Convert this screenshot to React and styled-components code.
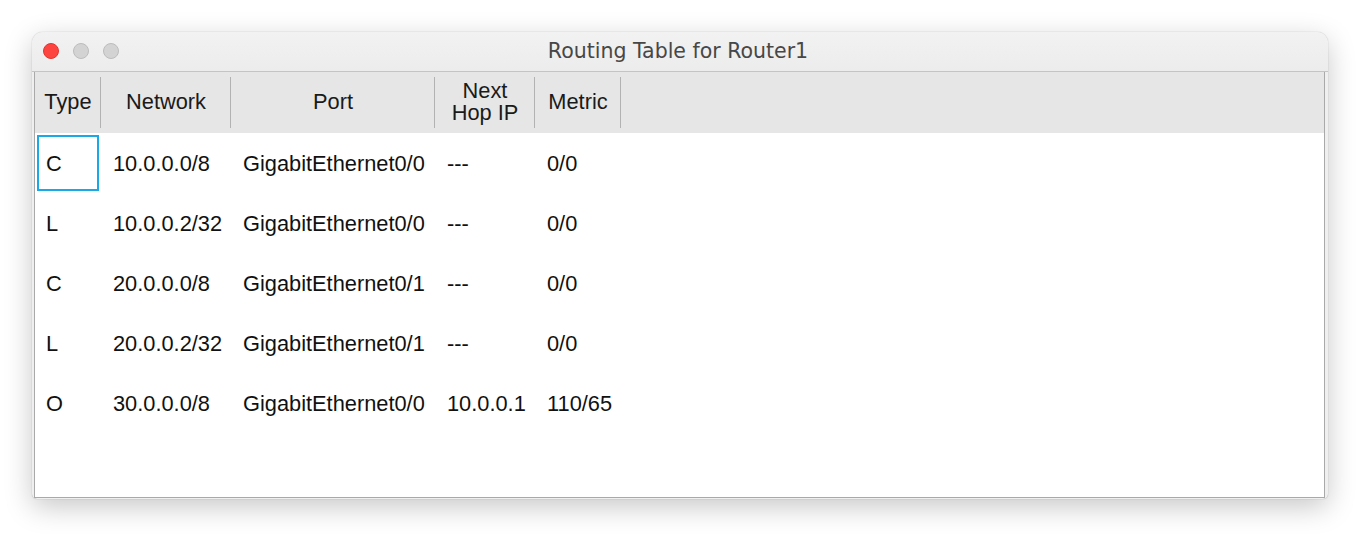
import styled, { createGlobalStyle } from "styled-components";

const GlobalStyle = createGlobalStyle`
    html, body {
        margin: 0;
        padding: 0;
        background: #ffffff;
    }
`;

const Page = styled.div`
    width: 1360px;
    height: 534px;
    box-sizing: border-box;
    padding: 32px 32px 0 32px;
    background: #ffffff;
`;

const Window = styled.div`
    width: 1296px;
    height: 467px;
    box-sizing: border-box;
    display: flex;
    flex-direction: column;
    background: #efefef;
    border-radius: 11px 11px 5px 5px;
    box-shadow: 0 0 1px rgba(0, 0, 0, 0.35), 0 8px 28px rgba(0, 0, 0, 0.22);
    padding: 0 3px 1px 2px;
    overflow: hidden;
`;

const TitleBar = styled.div`
    position: relative;
    height: 39px;
    flex: none;
    display: flex;
    align-items: center;
    justify-content: center;
    border-bottom: 1px solid #c4c4c4;
    margin: 0 -3px 0 -2px;
    background: linear-gradient(#f2f2f2, #ececec);
`;

const Lights = styled.div`
    position: absolute;
    left: 11px;
    top: 11px;
    display: flex;
    gap: 14px;
`;

const Light = styled.span`
    width: 16px;
    height: 16px;
    border-radius: 50%;
    box-sizing: border-box;
    background: ${({ $color }) => $color};
    border: 1px solid ${({ $edge }) => $edge};
`;

const Title = styled.div`
    font-family: "DejaVu Sans", sans-serif;
    font-size: 20.5px;
    color: #474747;
    margin-left: -4px;
    margin-top: -2px;
`;

const TableArea = styled.div`
    flex: 1;
    background: #ffffff;
    border: 1px solid #a9a9a9;
    border-top: none;
    font-family: "Liberation Sans", Arial, sans-serif;
    font-size: 21.8px;
    color: #111111;
`;

const Grid = styled.div`
    display: grid;
    grid-template-columns: 66px 130px 204px 100px 86px 1fr;
`;

const HeadCell = styled.div`
    height: 61px;
    box-sizing: border-box;
    background: #e6e6e6;
    display: flex;
    align-items: center;
    justify-content: center;
    padding-bottom: 2px;
    position: relative;
    color: #1a1a1a;

    &::after {
        content: "";
        display: ${({ $last }) => ($last ? "none" : "block")};
        position: absolute;
        right: -1px;
        top: 5px;
        bottom: 5px;
        width: 2px;
        background: #b2b2b2;
    }
`;

const HeadLabel = styled.div`
    text-align: center;
    line-height: 22px;
    white-space: pre-line;
`;

const Cell = styled.div`
    height: 60px;
    box-sizing: border-box;
    display: flex;
    align-items: center;
    padding-left: ${({ $first }) => ($first ? "11px" : "12px")};
    padding-top: 2px;
    white-space: nowrap;
    position: relative;

    ${({ $selected }) =>
        $selected &&
        `
        &::before {
            content: "";
            position: absolute;
            left: 2px;
            top: 2px;
            width: 62px;
            height: 56px;
            box-sizing: border-box;
            border: 2px solid #1aa9e4;
        }
    `}
`;

const headers = ["Type", "Network", "Port", "Next\nHop IP", "Metric", ""];

const routes = [
    ["C", "10.0.0.0/8", "GigabitEthernet0/0", "---", "0/0"],
    ["L", "10.0.0.2/32", "GigabitEthernet0/0", "---", "0/0"],
    ["C", "20.0.0.0/8", "GigabitEthernet0/1", "---", "0/0"],
    ["L", "20.0.0.2/32", "GigabitEthernet0/1", "---", "0/0"],
    ["O", "30.0.0.0/8", "GigabitEthernet0/0", "10.0.0.1", "110/65"],
];

export default function App() {
    return (
        <Page>
            <GlobalStyle />
            <Window>
                <TitleBar>
                    <Lights>
                        <Light $color="#fe443f" $edge="#e0342f" />
                        <Light $color="#d3d3d3" $edge="#bcbcbc" />
                        <Light $color="#d3d3d3" $edge="#bcbcbc" />
                    </Lights>
                    <Title>Routing Table for Router1</Title>
                </TitleBar>
                <TableArea>
                    <Grid>
                        {headers.map((h, i) => (
                            <HeadCell key={i} $last={i === headers.length - 1}>
                                <HeadLabel>{h}</HeadLabel>
                            </HeadCell>
                        ))}
                        {routes.map((row, r) =>
                            [...row, ""].map((value, c) => (
                                <Cell
                                    key={r + "-" + c}
                                    $first={c === 0}
                                    $selected={r === 0 && c === 0}
                                >
                                    {value}
                                </Cell>
                            ))
                        )}
                    </Grid>
                </TableArea>
            </Window>
        </Page>
    );
}
